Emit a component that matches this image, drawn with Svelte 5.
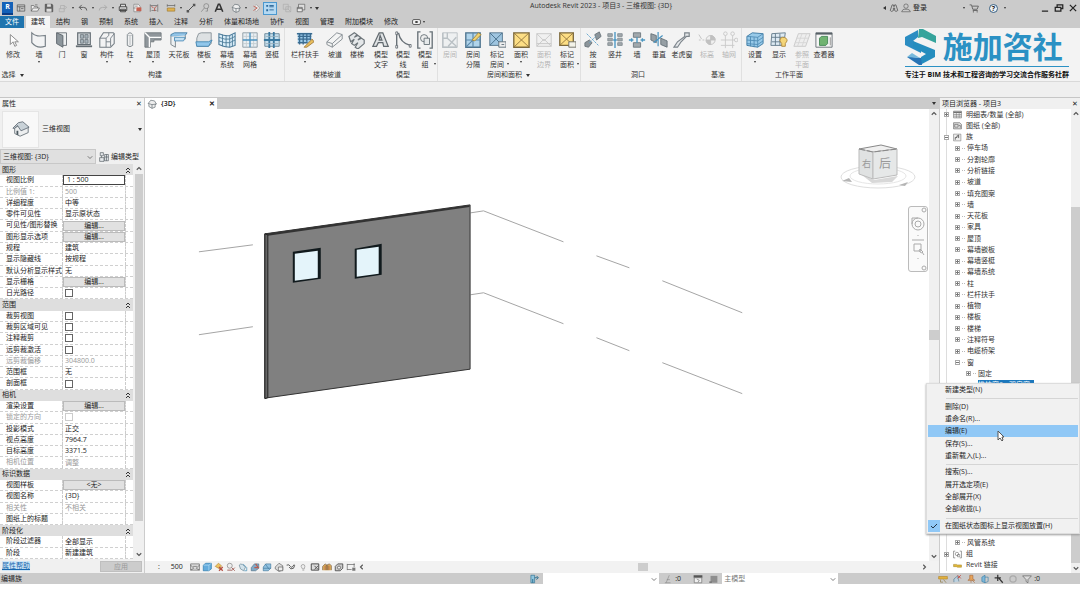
<script lang="ts">
    type Tool = { label: string; icon: string; size?: string; arrow?: boolean; off?: boolean };
    type Panel = { title: string; arrow?: boolean; line?: boolean; tools: Tool[] };
    type Prop = { name: string; value?: string; kind?: string; off?: boolean };

    const ribbonIcons: Record<string, string> = {
        cursor: '<path d="M7 4v11l3-3 2 5 2-1-2-4h4z" fill="#fff" stroke="#777"/>',
        wall: '<path d="M2 2c4 4 8 4 15 3v12c-6 2-11 1-15-4z" fill="#f2f4f5" stroke="#68727a" stroke-width="1.3"/>',
        door: '<path d="M4 2h11v14h-4" fill="#eceff0" stroke="#596269"/><path d="M4 2l7 3v13l-7-4z" fill="#828c93" stroke="#4c555c"/>',
        window: '<path d="M3 2h14v13H3z" fill="#d4dadd" stroke="#566067" stroke-width="1.3"/><path d="M6 4h3.500v4H6zM11 4h3.500v4H11zM6 9.500h3.500v4H6zM11 9.500h3.500v4H11z" fill="#9eabb3" stroke="#69737a"/><path d="M1 17h18" stroke="#566067" stroke-width="2"/>',
        component: '<path d="M2 8l4-6h11l1 1v11l-4 4H2z" fill="#f3f4f5" stroke="#68727a" stroke-width="1.200"/><path d="M2 8h7v10M9 8l3-3V2M9 12h5V8l4-5M14 12v5" fill="none" stroke="#68727a"/>',
        column: '<path d="M7 4q3-4 6 0v12q-3 3-6 0z" fill="#f0f1f2" stroke="#6c757b"/><path d="M7 4q3 3 6 0M10 6v10" fill="none" stroke="#abb1b5"/>',
        roof: '<path d="M1 2h18v8h-8v2H7v6H1z" fill="#858d92" stroke="#646c72"/><path d="M1 2l5 5h13M6 7v11" fill="none" stroke="#fff" stroke-width="1.500"/>',
        ceiling: '<path d="M1 4l4-2h14l-3 4H1z" fill="#8ac2e8" stroke="#34739d"/><path d="M1 6v9l5 3V9h11V5" fill="#edf0f2" stroke="#6a747b"/><path d="M5 7h12l-2 4H5z" fill="#bedff4" stroke="#3e85b3"/>',
        floor: '<path d="M4 3l3-1h11v12l-3 3H2V8z" fill="#dbe0e2" stroke="#7c868d"/><path d="M1 12h14l4-2-4 7H2z" fill="#88c3eb" stroke="#327cac"/>',
        curtain: '<path d="M1 3q7 3 12 2l6-3v14l-6 2Q7 18 1 15z" fill="#d7edf9" stroke="#3b6f91" stroke-width="1.200"/><path d="M5 4v13M9 5v13M13 5v13M16 4v13M1 7q7 3 12 2l6-3M1 11q7 3 12 2l6-3" fill="none" stroke="#3b6f91"/>',
        grid: '<path d="M2 2h16v16H2z" fill="#e8eff3" stroke="#81929c"/><path d="M2 6h16M2 14h16M6 2v16M14 2v16" stroke="#c0c9ce"/><path d="M10 2v16M2 10h16" stroke="#3888bb" stroke-width="1.500"/>',
        mullion: '<path d="M2 3h16v14H2z" fill="#c2dfef" stroke="#5b7a8d"/><path d="M7 1v18M12 1v18M1 10h18" stroke="#276c98" stroke-width="2"/><path d="M3 6h14M3 14h14" stroke="#8fa7b5"/>',
        railing: '<path d="M2 2h15v11H2z" fill="#93c7e8"/><path d="M1 3h17M2 6h15M2 9h15M2 13h11M4 3v12M8 3v12M12 3v9M16 3v7" stroke="#285e87" stroke-width="1.500"/><path d="M9 18l9-9 2 3-8 6z" fill="#e7b94d" stroke="#9b702b"/>',
        ramp: '<path d="M1 12L12 2l6 2v5L7 18l-6-3z" fill="#f4f5f5" stroke="#737c82"/><path d="M1 12l6 2L18 4M7 14v4" fill="none" stroke="#737c82"/>',
        stair: '<path d="M1 6l6-4 3 2-3 3 4-2 3 2-3 3 4-2 3 2v4l-7 6-3-2 3-5-4 3-3-2 3-5-4 3z" fill="#e3e6e8" stroke="#5f686e" stroke-width="1.300"/>',
        mtext: '<path d="M1 17L8 2h4l6 15h-5l-1-4H7l-2 4zM8 10h3L9 5z" fill="#dfe2e4" stroke="#535c62" stroke-width="1.400"/>',
        mline: '<path d="M3 2v16M5 2q2 11 13 14" fill="none" stroke="#596269" stroke-width="1.500"/><path d="M2 1h2v3H2zM2 16h2v3H2zM17 15h2v3h-2z" fill="#fff" stroke="#596269"/>',
        mgroup: '<path d="M5 1H2v18h3M15 1h3v18h-3" fill="none" stroke="#59646b" stroke-width="1.500"/><circle cx="9" cy="8" r="4" fill="#eee" stroke="#59646b"/><path d="M9 8h6v7H9z" fill="#e5e8ea" stroke="#59646b"/>',
        room: '<path d="M2 2h16v16H2z" fill="#e7edf0" stroke="#65757f"/><path d="M2 2v16h16M7 2v6H2M7 8l10 9M17 7L8 17" fill="none" stroke="#65757f" stroke-width="1.500"/>',
        separate: '<path d="M2 2h16v16H2z" fill="#a9d1eb" stroke="#3d6683" stroke-width="1.500"/><path d="M10 2v16M2 10h16M2 18L16 4" stroke="#4d7ea3" stroke-width="1.300"/><path d="M9 10l7-8 3 2-7 7z" fill="#f0cf63" stroke="#9b7b2b"/>',
        tag: '<path d="M2 2h14v14H2z" fill="#96c1df" stroke="#446781"/><path d="M2 2l14 14M16 2L2 16" stroke="#315c7d"/><path d="M12 12h8v6h-8z" fill="#eee" stroke="#50616d"/><path d="M15 15h3" stroke="#50616d"/>',
        area: '<path d="M2 2h17v16H2z" fill="#ffdc78" stroke="#705b2a" stroke-width="1.500"/><path d="M2 2l17 16M19 2L2 18" stroke="#87682a"/>',
        bound: '<path d="M2 3h16v14H2z" fill="#eee" stroke="#858585"/><path d="M2 3l8 8 8-8M2 17l8-8 8 8M2 14h16" fill="none" stroke="#858585"/>',
        areatag: '<path d="M2 2h15v14H2z" fill="#ffdc78" stroke="#705b2a" stroke-width="1.500"/><path d="M2 2l15 14M17 2L2 16" stroke="#87682a"/><path d="M12 12h8v6h-8z" fill="#f3f3e9" stroke="#5e5e55"/>',
        face: '<path d="M1 13l5-3 3 3-4 5-4-1zM12 4l5-3 2 5-5 4z" fill="#818b92" stroke="#5c666d"/><path d="M3 3l13 13M6 13L13 6" stroke="#519dcb" stroke-dasharray="3 1"/>',
        shaft: '<path d="M2 3h5v3H2zM13 3h5v3h-5zM2 8h5v3H2zM13 8h5v3h-5zM2 13h5v3H2zM13 13h5v3h-5z" fill="#9ba2a6" stroke="#7b868c"/><path d="M10 1v18M8 10h4" stroke="#378dbe" stroke-width="1.500"/>',
        owall: '<path d="M6 2h8v5H6zM6 13h8v5H6z" fill="#9aa2a6" stroke="#5f6b73"/><path d="M1 10h5M14 10h5M4 8v4M16 8v4M10 7v6" stroke="#398ebd" stroke-width="1.500"/>',
        vertical: '<path d="M1 3l6 2v8l-6-3zM12 8l7 3v7l-7-3z" fill="#8c969c" stroke="#56636b"/><path d="M9 1v16M4 13l10-8" stroke="#3488ba" stroke-width="1.300"/>',
        dormer: '<path d="M13 2h5v4h-3L9 12l-4 6H1l4-6 8-6z" fill="#e3e6e8" stroke="#707980" stroke-width="1.300"/>',
        level: '<path d="M1 10h9" stroke="#777" stroke-dasharray="2 2"/><circle cx="14" cy="10" r="5" fill="#eee" stroke="#777"/><path d="M14 5a5 5 0 0 1 5 5h-5zM14 10v5a5 5 0 0 1-5-5zM1 4l3 5" fill="#777" stroke="#777"/>',
        axis: '<path d="M6 5v14M14 5v14M1 10h15M1 16h15" stroke="#8c8c8c"/><circle cx="6" cy="3" r="2" fill="none" stroke="#888"/><circle cx="14" cy="3" r="2" fill="none" stroke="#888"/><circle cx="18" cy="10" r="2" fill="none" stroke="#888"/>',
        set: '<path d="M1 6l6-4 12 1v11l-6 4-12-2z" fill="#8fc6e9" stroke="#286c9a"/><path d="M1 6l12 1v11M13 7l6-4M5 6v11M9 7v11M1 10l12 1 6-4M1 14l12 1 6-4" fill="none" stroke="#3f82af"/>',
        show: '<path d="M2 3l15-1-2 14H1z" fill="#dceaf3" stroke="#526c7e"/><path d="M6 3v13M11 3v13M2 7h14M2 12h14" stroke="#526c7e"/><path d="M14 7q5 0 5 4l-2 3v3h-4v-3l-2-3q0-4 3-4z" fill="#f6d36c" stroke="#a67c28"/>',
        refplane: '<path d="M6 3h13l-5 14H1z" fill="#e8e8e8" stroke="#888"/><path d="M4 8h13M2 13h13M10 3L5 17M15 3l-5 14" stroke="#aaa"/>',
        viewer: '<path d="M1 2h18v16H1z" fill="#f7f7f7" stroke="#566067"/><path d="M1 3h18" stroke="#475158" stroke-width="2"/><path d="M5 8l2-2h7v8l-2 2H5z" fill="#62ad64" stroke="#327c45"/><path d="M17 7v9" stroke="#888"/>',
    };

    const smallIcons: Record<string, string> = {
        home: '<path d="M2 3h12v10H2zM2 6h12M6 6v7M8 9h4" fill="none" stroke="#444"/>',
        open: '<path d="M2 13V4h4l1 2h5v2M2 13l3-5h10l-3 5z" fill="#eee" stroke="#555"/><path d="M8 3h4" stroke="#555"/>',
        save: '<path d="M2 2h11l1 2v10H2z" fill="#666" stroke="#444"/><path d="M5 2h6v4H5zM4 9h8v5H4z" fill="#ddd"/>',
        sync: '<path d="M2 9h8v5H2zM4 9V4h6v5M9 4l5 3-5 4" fill="none" stroke="#aaa"/>',
        undo: '<path d="M6 3L2 7l4 4M2 7h7q5 0 5 5" fill="none" stroke="#555" stroke-width="1.500"/>',
        redo: '<path d="M10 3l4 4-4 4M14 7H7q-5 0-5 5" fill="none" stroke="#aaa" stroke-width="1.500"/>',
        print: '<path d="M4 6V2h8v4M2 6h12v6H2zM4 10h8v4H4z" fill="#ddd" stroke="#444" stroke-width="1.500"/>',
        pdf: '<path d="M3 2h7l3 3v9H3z" fill="#eee" stroke="#777"/><path d="M7 7h8v6H7z" fill="#c76050"/><path d="M5 5h4M2 8h4" stroke="#666"/>',
        dims: '<path d="M2 2v12M14 2v12M4 12h8M2 4h12" stroke="#777" stroke-width="1.300"/><path d="M4 5l3 3M12 5L9 8v5" fill="none" stroke="#bd594c" stroke-width="1.500"/>',
        ruler: '<path d="M2 8h12v5H2z" fill="#dfb250" stroke="#9a742c"/><path d="M2 4h12M2 2v4M14 2v4" stroke="#555"/>',
        line: '<path d="M3 13L13 3" stroke="#444" stroke-width="1.500"/><path d="M1 11h4v4H1zM11 1h4v4h-4z" fill="#555"/>',
        mark: '<circle cx="10" cy="5" r="4" fill="none" stroke="#777"/><path d="M7 8l-5 6M12 8v5H9" fill="none" stroke="#777"/>',
        text: '<path d="M2 14L7 2h2l5 12M4 10h8" fill="none" stroke="#333" stroke-width="2.500"/>',
        house: '<path d="M2 7l4-5 6 1 3 5-2 1v4l-5 2-5-3V8z" fill="#eee" stroke="#59636a"/><path d="M2 7l6 2 7-1M8 9v6" fill="none" stroke="#59636a"/>',
        section: '<path d="M8 2l6 6-6 6" fill="#eee" stroke="#888"/><path d="M4 5l6 3-6 4" fill="none" stroke="#c06458" stroke-width="1.500"/>',
        thin: '<path d="M2 3h3v3H2zM2 10h3v3H2z" fill="#2e699a"/><path d="M7 4h7M7 6h7M7 11h7" stroke="#2e699a" stroke-width="1.500"/>',
        closeviews: '<path d="M2 2h8v8H2zM6 6h8v8H6z" fill="none" stroke="#aaa"/><path d="M9 9l5 5" stroke="#aaa"/>',
        switch: '<path d="M4 2h10v9H4z" fill="#ddd" stroke="#555"/><path d="M2 7h8v7H2zM2 9h8" fill="#eee" stroke="#444"/>',
        find: '<path d="M5 3h2l1 3 1-3h2l3 9q-3 3-5 0V8H7v4q-3 3-5 0z" fill="none" stroke="#555" stroke-width="1.300"/>',
        user: '<circle cx="8" cy="5" r="3.500" fill="none" stroke="#555"/><path d="M1 14q2-5 5-4h4q4 0 5 4z" fill="none" stroke="#555"/>',
        cart: '<path d="M1 3h3l2 7h7l2-5H5M6 12h8" fill="none" stroke="#555" stroke-width="1.300"/><circle cx="7" cy="14" r="1" fill="#555"/><circle cx="13" cy="14" r="1" fill="#555"/>',
        detail: '<path d="M1 3h14v10H1z" fill="#ddd" stroke="#555"/><path d="M1 5l5 5-5 3M15 5l-5 5 5 3M5 7h6" fill="none" stroke="#555"/>',
        cube: '<path d="M2 5l4-3h9v9l-4 3H2z" fill="#63abdc" stroke="#2474a9"/><path d="M2 5h9v9M11 5l4-3" fill="none" stroke="#bde0f5"/>',
        sun: '<path d="M2 7l5-5 5 4-3 5z" fill="#edc362" stroke="#b38231"/><path d="M8 8l6 6M14 8l-6 6" stroke="#b54e41" stroke-width="2"/>',
        shadow: '<circle cx="6" cy="6" r="4" fill="#eee" stroke="#777"/><path d="M2 13h7M9 9l5 5M14 9l-5 5" stroke="#a25f58" stroke-width="1.500"/>',
        render: '<path d="M2 5q2-3 5-1l5 4-3 6-5-3z" fill="#d3e3eb" stroke="#597a8c"/><path d="M8 3l6 6v5h-4" fill="none" stroke="#2e83b1"/>',
        crop: '<path d="M2 9l5-6h7v7l-5 4H2z" fill="#80abc9" stroke="#4a6a7f"/><path d="M9 3l5 7M7 9h7" stroke="#b95b4f" stroke-width="2"/>',
        cropon: '<path d="M2 8l4-5h8v7l-4 4H2z" fill="#91c1e0" stroke="#3c7499"/><path d="M5 3l6 8M2 10h12" stroke="#3c7499"/>',
        lock: '<path d="M2 8l6-6 6 4v7l-6 2-6-4z" fill="#ddd" stroke="#555"/><path d="M7 8h7v6H7z" fill="#eee" stroke="#555"/>',
        glasses: '<path d="M1 5q4-2 6 2t6-3M5 8q2 5 7 2l2-5" fill="none" stroke="#555" stroke-width="1.500"/>',
        bulb: '<path d="M8 4q3 0 3 3l-1 4H7L5 7q0-3 3-3zM7 13h3" fill="#eee" stroke="#888"/>',
        temp: '<path d="M2 3h12v10H2z" fill="#ddd" stroke="#444" stroke-width="1.500"/><path d="M7 6l6 6M13 6l-6 6" stroke="#555" stroke-width="1.500"/>',
        analyse: '<path d="M1 13V7l4-4 4 3v7M7 13V5l5-2 3 3v7" fill="#d8ac58" stroke="#775840"/><path d="M5 6v7M11 6v7" stroke="#a44840"/>',
        locate: '<path d="M2 7l4-4h8v7l-4 4H2z" fill="#ccc" stroke="#444" stroke-width="1.300"/><circle cx="8" cy="9" r="2.500" fill="#eee" stroke="#444"/>',
        edges: '<path d="M2 3v10M2 4h12M2 12h7M13 2v6" fill="none" stroke="#555"/><path d="M10 9h5v5h-5z" fill="#777"/>',
        workset: '<path d="M3 2h6v12H3z" fill="#92c6de" stroke="#276d8f"/><path d="M9 6h5M12 3l3 3-3 3M6 8v6" fill="none" stroke="#276d8f" stroke-width="1.500"/>',
        pin: '<path d="M10 2L5 14M3 14h9M6 9h5" stroke="#888" fill="none"/>',
        list: '<path d="M1 2h14v4H1z" fill="#555"/><path d="M2 6h12v8H2zM6 8l4 2-2 3" fill="#eee" stroke="#666"/>',
        block: '<path d="M4 3h11v11H4z" fill="#8e8e8e"/><path d="M2 12h4v2H2z" fill="#666"/>',
        link: '<path d="M1 4h14v4H1z" fill="#e2b13d" stroke="#b3872b"/><path d="M4 9v4h4M9 9l4 5" fill="none" stroke="#8c7439"/>',
        under: '<path d="M3 13V8l6-5 2 9" fill="#bad0df" stroke="#54788d"/><path d="M9 2l5 5M14 2L9 7" stroke="#c24b42" stroke-width="1.500"/>',
        pinned: '<path d="M6 2h5v6l3 2H3l3-2z" fill="#e7a45c" stroke="#aa6937"/><path d="M8 10v4M10 10l4 4" stroke="#aa6937"/>',
        byface: '<path d="M3 5l5-3v12l-5-2z" fill="#7db8db" stroke="#357ba3"/><path d="M8 5h5v7l-5 2" fill="none" stroke="#357ba3"/>',
        drag: '<path d="M6 1v10M1 6h10M8 7l6 7" stroke="#333" stroke-width="2"/>',
        ring: '<circle cx="8" cy="8" r="5" fill="none" stroke="#aaa" stroke-width="2"/>',
        filter: '<path d="M1 3h14L9.500 9v5L6.500 12V9z" fill="#ddd" stroke="#555"/>',
        types: '<path d="M2 1h5v5H2zM1 9h7v6H1zM9 4h6v10H9zM9 8h6M4 6v3M12 4v10" fill="#e5e9eb" stroke="#4c555b"/>',
        schedule: '<path d="M1 2h14v12H1z" fill="#eee" stroke="#666"/><path d="M1 4h14" stroke="#555" stroke-width="2"/><path d="M1 8h14M1 11h14M6 4v10M11 4v10" stroke="#777"/>',
        sheet: '<path d="M1 3h11l3 3v8H1z" fill="#ddd" stroke="#555"/><path d="M3 6h6v5H3zM10 8h3v4" fill="none" stroke="#555"/>',
        family: '<path d="M1 2h13v12H1z" fill="#eee" stroke="#777"/><path d="M4 12V8h3V5h3M10 3v6" fill="none" stroke="#555" stroke-width="1.500"/>',
        group: '<path d="M4 2H1v12h3M12 2h3v12h-3" fill="none" stroke="#555"/><circle cx="7" cy="7" r="3" fill="none" stroke="#666"/><path d="M8 8h4v4H8z" fill="none" stroke="#666"/>',
        revit: '<path d="M1 6h5l2 1h7v4H8L6 10H1z" fill="#dfb73a" stroke="#a98a2a"/>',
    };

    const quick = [
        { icon: 'home' }, { icon: 'open' }, { icon: 'save' },
        { icon: 'sync', arrow: true }, { icon: 'undo', arrow: true }, { icon: 'redo', arrow: true },
        { icon: 'print' }, { icon: 'pdf', gap: true }, { icon: 'dims', gap: true },
        { icon: 'ruler', arrow: true }, { icon: 'line' }, { icon: 'mark' }, { icon: 'text', gap: true },
        { icon: 'house', arrow: true }, { icon: 'section' }, { icon: 'thin', gap: true, on: true },
        { icon: 'closeviews' }, { icon: 'switch', arrow: true },
    ];

    const tabs = ['文件', '建筑', '结构', '钢', '预制', '系统', '插入', '注释', '分析', '体量和场地', '协作', '视图', '管理', '附加模块', '修改'];

    const panels: Panel[] = [
        { title: '选择', arrow: true, tools: [{ label: '修改', icon: 'cursor', size: 'm' }] },
        { title: '构建', line: true, tools: [
            { label: '墙', icon: 'wall', size: 'm', arrow: true }, { label: '门', icon: 'door' }, { label: '窗', icon: 'window' },
            { label: '构件', icon: 'component', size: 'm', arrow: true }, { label: '柱', icon: 'column', arrow: true },
            { label: '屋顶', icon: 'roof', size: 'm', arrow: true }, { label: '天花板', icon: 'ceiling', size: 'l' },
            { label: '楼板', icon: 'floor', arrow: true }, { label: '幕墙 系统', icon: 'curtain', size: 'm' },
            { label: '幕墙 网格', icon: 'grid' }, { label: '竖梃', icon: 'mullion' },
        ] },
        { title: '楼梯坡道', tools: [
            { label: '栏杆扶手', icon: 'railing', size: 'xl', arrow: true }, { label: '坡道', icon: 'ramp' }, { label: '楼梯', icon: 'stair' },
        ] },
        { title: '模型', line: true, tools: [
            { label: '模型 文字', icon: 'mtext' }, { label: '模型 线', icon: 'mline' }, { label: '模型 组', icon: 'mgroup', arrow: true },
        ] },
        { title: '房间和面积', arrow: true, line: true, tools: [
            { label: '房间', icon: 'room', off: true }, { label: '房间 分隔', icon: 'separate', size: 'm' },
            { label: '标记 房间', icon: 'tag', size: 'm', arrow: true }, { label: '面积', icon: 'area', size: 'm', arrow: true },
            { label: '面积 边界', icon: 'bound', off: true }, { label: '标记 面积', icon: 'areatag', size: 'm', arrow: true },
        ] },
        { title: '洞口', tools: [
            { label: '按 面', icon: 'face' }, { label: '竖井', icon: 'shaft' }, { label: '墙', icon: 'owall' },
            { label: '垂直', icon: 'vertical' }, { label: '老虎窗', icon: 'dormer', size: 'm' },
        ] },
        { title: '基准', line: true, tools: [
            { label: '标高', icon: 'level', off: true }, { label: '轴网', icon: 'axis', off: true },
        ] },
        { title: '工作平面', tools: [
            { label: '设置', icon: 'set', size: 'm', arrow: true }, { label: '显示', icon: 'show', size: 'm' },
            { label: '参照 平面', icon: 'refplane', off: true }, { label: '查看器', icon: 'viewer' },
        ] },
    ];

    const props: Prop[] = [
        { name: '图形', kind: 'head' },
        { name: '视图比例', value: '1 : 500', kind: 'focus' },
        { name: '比例值 1:', value: '500', off: true },
        { name: '详细程度', value: '中等' },
        { name: '零件可见性', value: '显示原状态' },
        { name: '可见性/图形替换', value: '编辑...', kind: 'button' },
        { name: '图形显示选项', value: '编辑...', kind: 'button' },
        { name: '规程', value: '建筑' },
        { name: '显示隐藏线', value: '按规程' },
        { name: '默认分析显示样式', value: '无' },
        { name: '显示栅格', value: '编辑...', kind: 'button' },
        { name: '日光路径', kind: 'check' },
        { name: '范围', kind: 'head' },
        { name: '裁剪视图', kind: 'check' },
        { name: '裁剪区域可见', kind: 'check' },
        { name: '注释裁剪', kind: 'check' },
        { name: '远剪裁激活', kind: 'check' },
        { name: '远剪裁偏移', value: '304800.0', off: true },
        { name: '范围框', value: '无' },
        { name: '剖面框', kind: 'check' },
        { name: '相机', kind: 'head' },
        { name: '渲染设置', value: '编辑...', kind: 'button' },
        { name: '锁定的方向', kind: 'check', off: true },
        { name: '投影模式', value: '正交' },
        { name: '视点高度', value: '7964.7' },
        { name: '目标高度', value: '3371.5' },
        { name: '相机位置', value: '调整', off: true },
        { name: '标识数据', kind: 'head' },
        { name: '视图样板', value: '<无>', kind: 'button' },
        { name: '视图名称', value: '{3D}' },
        { name: '相关性', value: '不相关', off: true },
        { name: '图纸上的标题', value: '' },
        { name: '阶段化', kind: 'head' },
        { name: '阶段过滤器', value: '全部显示' },
        { name: '阶段', value: '新建建筑' },
    ];

    const families = ['停车场', '分割轮廓', '分析链接', '坡道', '填充图案', '墙', '天花板', '家具', '屋顶', '幕墙嵌板', '幕墙竖梃', '幕墙系统', '柱', '栏杆扶手', '植物', '楼板', '楼梯', '注释符号', '电缆桥架'];

    const menu = ['新建类型(N)', '-', '删除(D)', '重命名(R)...', '编辑(E)', '保存(S)...', '重新载入(L)...', '-', '搜索(S)...', '展开选定项(E)', '全部展开(X)', '全部收拢(L)', '-', '在图纸状态图标上显示视图放置(H)'];

    const viewTools = ['detail', 'cube', 'sun', 'shadow', 'render', 'crop', 'cropon', 'lock', 'glasses', 'bulb', 'temp', 'analyse', 'locate', 'edges'];

    let checks = $state<Record<string, boolean>>({});
    let activeTab = $state('建筑');
</script>

{#snippet small(name: string)}
    <svg class="small" viewBox="0 0 16 16" aria-hidden="true">{@html smallIcons[name]}</svg>
{/snippet}

{#snippet chevron(dir: string)}
    <svg class="chev {dir}" viewBox="0 0 8 8" aria-hidden="true"><path d="M1 5l3-3 3 3" /></svg>
{/snippet}

{#snippet branch(label: string, level: string, open = false)}
    <li class="node {level}">
        <i class="box" class:open></i><i class="twig"></i><span>{label}</span>
    </li>
{/snippet}

<div class="app">
    <header class="titlebar">
        <div class="quick">
            <button class="logo" aria-label="Revit">R</button>
            {#each quick as q}
                <button class="qbtn" class:on={q.on} aria-label={q.icon}>{@render small(q.icon)}</button>
                {#if q.arrow}<i class="tri tiny"></i>{/if}
                {#if q.gap}<i class="gap"></i>{/if}
            {/each}
            <i class="tri"></i>
        </div>
        <div class="title">Autodesk Revit 2023 - 项目3 - 三维视图: {'{3D}'}</div>
        <div class="account">
            <i class="tri left"></i>
            <button class="qbtn" aria-label="搜索">{@render small('find')}</button>
            <button class="login">{@render small('user')}登录</button>
            <i class="tri tiny"></i>
            <button class="qbtn" aria-label="商店">{@render small('cart')}</button>
            <button class="help" aria-label="帮助">?</button>
            <i class="tri tiny"></i>
        </div>
        <div class="winbtns">
            <button aria-label="最小化"><svg class="small" viewBox="0 0 16 16"><path d="M3 13h10" /></svg></button>
            <button aria-label="还原"><svg class="small" viewBox="0 0 16 16"><path d="M5 6V3h9v6h-3M2 7h9v6H2z" /></svg></button>
            <button aria-label="关闭"><svg class="small" viewBox="0 0 16 16"><path d="M3 3l10 10M13 3L3 13" /></svg></button>
        </div>
    </header>

    <nav class="tabs">
        {#each tabs as tab, i}
            <button class:file={i === 0} class:active={tab === activeTab} onclick={() => (activeTab = tab)}>{tab}</button>
        {/each}
        <button class="expand" aria-label="功能区"><i class="pill"></i><i class="tri tiny"></i></button>
    </nav>

    <section class="ribbon">
        {#each panels as panel}
            <div class="panel" class:line={panel.line}>
                <div class="tools">
                    {#each panel.tools as tool}
                        <button class="tool {tool.size ?? ''}" disabled={tool.off}>
                            <svg viewBox="0 0 20 20" aria-hidden="true">{@html ribbonIcons[tool.icon]}</svg>
                            {#each tool.label.split(' ') as part}<span>{part}</span>{/each}
                            {#if tool.arrow}<i class="tri tiny" class:side={tool.label.includes(' ')}></i>{/if}
                        </button>
                    {/each}
                </div>
                <div class="caption">{panel.title}{#if panel.arrow}<i class="tri"></i>{/if}</div>
            </div>
        {/each}
        <div class="brand">
            <div class="brand-top">
                <svg viewBox="0 0 32 36" aria-hidden="true">
                    <path d="M0 8L13 1v7L8 12l8 5v7L0 16z" fill="#2b8dc2" />
                    <path d="M14 0h4l13 7v7l-14-6-4 1z" fill="#36a49c" />
                    <path d="M8 12l22 9v7L15 36l1-8 5-3-13-7z" fill="#258dbe" />
                    <path d="M2 28h5l9 1 1 7h-3z" fill="#2874b5" />
                    <path d="M2 28l5-4 8 5" fill="#77b9dc" />
                </svg>
                <strong>施加咨社</strong>
            </div>
            <p>专注于 BIM 技术和工程咨询的学习交流合作服务社群</p>
        </div>
    </section>
    <div class="options"></div>

    <main class="work">
        <aside class="props">
            <div class="bar"><span>属性</span><button aria-label="关闭属性">✕</button></div>
            <div class="type">
                <div class="thumb">
                    <svg viewBox="0 0 20 20" aria-hidden="true">
                        <path d="M3 9v6l6 3 9-4V8l-7-4z" fill="#eceeef" stroke="#6a747b" />
                        <path d="M1 9l6-6 5-1 7 6-9 4-4-6-4 4z" fill="#c9d2d8" stroke="#66717a" />
                        <path d="M5 12h2v5l-2-1z" fill="#4c5960" />
                    </svg>
                </div>
                <span>三维视图</span>
                <i class="tri"></i>
            </div>
            <div class="instance">
                <div class="select">
                    <select aria-label="类型选择器"><option>三维视图: {'{3D}'}</option></select>
                    {@render chevron('down')}
                </div>
                <button>{@render small('types')}编辑类型</button>
            </div>
            <div class="gridwrap">
                <div class="rows">
                    {#each props as p, i}
                        {#if p.kind === 'head'}
                            <div class="head">
                                <span>{p.name}</span>
                                <svg class="fold-mark" viewBox="0 0 6 8" aria-hidden="true"><path d="M1 4l2-2 2 2M1 7l2-2 2 2" /></svg>
                            </div>
                        {:else}
                            <div class="row" class:off={p.off}>
                                <label for="prop-{i}">{p.name}</label>
                                <div class="val">
                                    {#if p.kind === 'check'}
                                        <input id="prop-{i}" type="checkbox" disabled={p.off} bind:checked={checks[p.name]} />
                                    {:else if p.kind === 'button'}
                                        <button id="prop-{i}">{p.value}</button>
                                    {:else}
                                        <input id="prop-{i}" type="text" class:focus={p.kind === 'focus'} disabled={p.off} value={p.value} />
                                    {/if}
                                </div>
                                <i class="mini"></i>
                            </div>
                        {/if}
                    {/each}
                </div>
                <div class="vscroll props-scroll">{@render chevron('up')}<i></i>{@render chevron('down')}</div>
            </div>
            <div class="foot"><a href="#help">属性帮助</a><button disabled>应用</button></div>
        </aside>

        <section class="view">
            <div class="viewtabs">
                <div class="viewtab">{@render small('house')}<span>{'{3D}'}</span><button aria-label="关闭视图">✕</button></div>
                <i class="tri"></i>
            </div>
            <div class="stage">
                <div class="canvas">
                    <svg class="scene" viewBox="145 109 785 451" preserveAspectRatio="xMinYMin meet" role="img" aria-label="三维视图">
                        <g stroke="#a5a5a5" stroke-width="1" fill="none">
                            <path d="M199 252l54-7M199 335l54-8M471 213l13-2 80 31M597 256l33 12M663 281l80 32M471 295l13-2 80 31M597 338l33 13M663 363l80 31" />
                        </g>
                        <path d="M265 234l205.500-29v164.500L265 398.500z" fill="#808080" stroke="#333" />
                        <path d="M265 234l205-29v2L268 236z" fill="#333" />
                        <path d="M265 234l3 1v163l-3 1z" fill="#666" stroke="#222" />
                        <path d="M293 252l28-4v31l-28 4z" fill="#111a1d" />
                        <path d="M295 254l23-3v27l-23 3z" fill="#e4f4fa" />
                        <path d="M355 249l27-5v31l-27 4z" fill="#111a1d" />
                        <path d="M357 250l22-3v27l-22 3z" fill="#e4f4fa" />
                    </svg>
                    <svg class="cube" viewBox="0 0 78 54" aria-label="ViewCube">
                        <ellipse cx="39" cy="36" rx="37" ry="11" fill="none" stroke="#dedede" />
                        <ellipse cx="39" cy="35" rx="28" ry="8" fill="#fff" stroke="#e6e6e6" />
                        <path d="M3 40l7-3 3 4zM60 44l9-3-3 4z" fill="#b5b5b5" />
                        <path d="M23 34l12 5 24-4-6 6-20 1z" fill="#d8d8d8" />
                        <path d="M20 8l22-4 16 4-24 3z" fill="#f0f0f0" stroke="#888" />
                        <path d="M20 8l14 3v27l-14-5z" fill="#e0e2e2" stroke="#bbb" />
                        <path d="M34 11l24-3v26l-24 4z" fill="#e6e8e8" stroke="#bbb" />
                        <path d="M20 8l14 3 24-3" fill="none" stroke="#888" stroke-dasharray="6 2" />
                        <text x="23" y="26" font-size="9">右</text>
                        <text x="40" y="27" font-size="12">后</text>
                    </svg>
                    <div class="navbar">
                        <svg viewBox="0 0 18 64" aria-hidden="true">
                            <circle cx="15" cy="3" r="2" /><circle cx="15" cy="61" r="2" />
                            <circle cx="9" cy="17" r="6" /><circle cx="9" cy="17" r="3" />
                            <path d="M3 17v-6h6M9 28v1M3 33h12M5 37h7v7H5zM11 42a2 2 0 1 0 3 3zM13 45l2 3M9 51v1" />
                        </svg>
                    </div>
                </div>
                <div class="vscroll view-scroll">{@render chevron('up')}<i></i>{@render chevron('down')}</div>
            </div>
            <div class="viewbar">
                <span class="scale"><b>:</b><b>500</b></span>
                {#each viewTools as v}
                    <button aria-label={v}>{@render small(v)}</button>
                {/each}
                <span class="hscroll">{@render chevron('prev')}<i></i>{@render chevron('next')}</span>
            </div>
        </section>

        <aside class="browser">
            <div class="bar"><span>项目浏览器 - 项目3</span><button aria-label="关闭浏览器">✕</button></div>
            <div class="gridwrap">
                <ul class="tree">
                    <li class="node"><i class="box"></i>{@render small('schedule')}<span>明细表/数量 (全部)</span></li>
                    <li class="node"><i class="box none"></i>{@render small('sheet')}<span>图纸 (全部)</span></li>
                    <li class="node"><i class="box open"></i>{@render small('family')}<span>族</span></li>
                    {#each families as f}
                        {@render branch(f, 'l2')}
                    {/each}
                    {@render branch('窗', 'l2', true)}
                    {@render branch('固定', 'l3')}
                    <li class="node l3"><i class="box none"></i><i class="twig"></i><span class="sel">推拉窗6 - 双扇窗</span></li>
                    <li class="fold"></li>
                    {@render branch('风管系统', 'l2')}
                    <li class="node"><i class="box"></i>{@render small('group')}<span>组</span></li>
                    <li class="node"><i class="box none"></i>{@render small('revit')}<span>Revit 链接</span></li>
                </ul>
                <div class="vscroll tree-scroll">{@render chevron('up')}<i></i>{@render chevron('down')}</div>
            </div>
            <div class="menu" role="menu">
                {#each menu as item, i}
                    {#if item === '-'}
                        <hr />
                    {:else}
                        <button role="menuitem" class:hot={item === '编辑(E)'}>
                            <i class="mark">{#if i === menu.length - 1}<svg viewBox="0 0 12 12"><path d="M3 6l2 2 4-4" /></svg>{/if}</i>
                            <span>{item}</span>
                        </button>
                    {/if}
                {/each}
                <svg class="pointer" viewBox="0 0 8 12" aria-hidden="true"><path d="M1 1v9l2-2 2 3 1-1-1-3h2z" /></svg>
            </div>
        </aside>
    </main>

    <footer class="status">
        <span class="msg">编辑族</span>
        <div class="mid">
            {@render small('workset')}
            <div class="select"><select aria-label="工作集"><option></option></select>{@render chevron('down')}</div>
            <span class="count">{@render small('pin')}:0</span>
            <span class="pair">{@render small('list')}{@render small('block')}</span>
            <div class="select"><select aria-label="设计选项"><option>主模型</option></select>{@render chevron('down')}</div>
        </div>
        <div class="end">
            {#each ['link', 'under', 'pinned', 'byface', 'drag', 'ring'] as s}
                <button aria-label={s}>{@render small(s)}</button>
            {/each}
            <span class="count">{@render small('filter')}:0</span>
        </div>
    </footer>
</div>

<style>
    :global(body) {
        margin: 0;
        background: #fff;
    }

    .app {
        display: flex;
        flex-direction: column;
        height: 100vh;
        padding-bottom: 24px;
        box-sizing: border-box;
        overflow: hidden;
        font-family: "Open Sans", "Noto Sans CJK SC", sans-serif;
        font-size: 7px;
        line-height: 10px;
        color: #222;
        white-space: nowrap;
    }

    .app :global(*) {
        box-sizing: border-box;
    }

    button,
    input,
    select {
        font: inherit;
        color: inherit;
        margin: 0;
        padding: 0;
        border: 0;
        border-radius: 0;
        background: none;
        outline: none;
        min-width: 0;
    }

    svg {
        display: block;
        flex-shrink: 0;
    }

    i {
        font-style: normal;
        flex-shrink: 0;
    }

    .small {
        width: 10px;
        height: 10px;
    }

    .tri {
        border: 2px solid transparent;
        border-top: 3px solid #333;
        border-bottom: 0;
        margin: 0 1px;
    }

    .tri.tiny {
        border-width: 2px 1px 0;
        margin: 0 2px;
    }

    .tri.left {
        border: 2px solid transparent;
        border-right: 3px solid #333;
        border-left: 0;
    }

    .chev {
        width: 6px;
        height: 6px;
        fill: none;
        stroke: #555;
        stroke-width: 1.5;
    }

    .chev.down {
        transform: rotate(180deg);
    }

    .chev.prev {
        transform: rotate(-90deg);
    }

    .chev.next {
        transform: rotate(90deg);
    }

    .titlebar {
        display: flex;
        align-items: center;
        height: 16px;
        background: #cbcbcb;
    }

    .quick,
    .account,
    .winbtns {
        display: flex;
        align-items: center;
    }

    .logo {
        width: 11px;
        height: 13px;
        margin: 0 1px 0 2px;
        background: #1461b8;
        border-bottom: 2px solid #0b3d86;
        color: #fff;
        font-weight: 700;
    }

    .qbtn {
        display: grid;
        place-items: center;
        width: 14px;
        height: 13px;
    }

    .qbtn.on {
        background: #b5d9f2;
        border: 1px solid #4b98cf;
    }

    .gap {
        width: 3px;
    }

    .title {
        flex: 1;
        text-align: center;
        padding-bottom: 4px;
        color: #333;
    }

    .login {
        display: flex;
        align-items: center;
        gap: 2px;
        margin-right: 34px;
    }

    .help {
        width: 9px;
        height: 9px;
        margin: 0 4px 0 8px;
        border: 1px solid #385f80;
        border-radius: 50%;
        background: #eef3f7;
        font-weight: 700;
        line-height: 7px;
    }

    .winbtns {
        gap: 4px;
        padding: 0 2px 0 32px;
    }

    .winbtns path {
        fill: none;
        stroke: #222;
        stroke-width: 2;
    }

    .tabs {
        display: flex;
        gap: 1px;
        height: 12px;
        background: #cbcbcb;
    }

    .tabs button {
        padding: 0 5px;
        line-height: 12px;
    }

    .tabs .file {
        margin-right: 1px;
        background: #1f74ae;
        color: #fff;
    }

    .tabs .active {
        background: #f5f5f5;
    }

    .tabs .expand {
        display: flex;
        align-items: center;
        padding-left: 8px;
    }

    .pill {
        width: 9px;
        height: 6px;
        border: 1px solid #666;
        border-radius: 2px;
        background: radial-gradient(#444 1px, #eee 2px);
    }

    .ribbon {
        display: flex;
        height: 54px;
        background: #f3f3f3;
        border-bottom: 1px solid #d9d9d9;
    }

    .panel {
        display: flex;
        flex-direction: column;
        justify-content: space-between;
        padding: 3px 1px 1px;
    }

    .panel.line {
        border-right: 1px solid #e0e0e0;
    }

    .tools {
        display: flex;
        align-items: flex-start;
    }

    .tool {
        display: flex;
        flex-direction: column;
        align-items: center;
        position: relative;
        width: 22px;
        color: #333;
    }

    .tool.m {
        width: 24px;
    }

    .tool.l {
        width: 28px;
    }

    .tool.xl {
        width: 38px;
    }

    .tool svg {
        width: 18px;
        height: 18px;
        margin-bottom: 1px;
        opacity: 0.9;
    }

    .tool .tri {
        margin-top: 1px;
    }

    .tool .side {
        position: absolute;
        right: 0;
        bottom: 5px;
        margin: 0;
    }

    .tool:disabled {
        color: #b5b5b5;
    }

    .tool:disabled svg {
        opacity: 0.4;
    }

    .caption {
        display: flex;
        align-items: center;
        justify-content: center;
        gap: 3px;
        color: #333;
    }

    .brand {
        margin: 0 11px 0 auto;
    }

    .brand-top {
        display: flex;
        align-items: center;
        gap: 6px;
        height: 39px;
        padding-right: 6px;
        border-bottom: 1px solid #2b91c4;
    }

    .brand-top svg {
        width: 32px;
        height: 36px;
    }

    .brand strong {
        font-size: 30px;
        line-height: 36px;
        font-weight: 700;
        color: #2b91c4;
    }

    .brand p {
        margin: 3px 0 0;
        font-weight: 700;
        color: #111;
    }

    .options {
        height: 15px;
        background: #efefef;
    }

    .work {
        display: flex;
        flex: 1;
        min-height: 0;
        border-top: 1px solid #c6c6c6;
    }

    .props {
        display: flex;
        flex-direction: column;
        width: 145px;
        background: #f0f0f0;
        border-right: 1px solid #ccc;
    }

    .bar {
        display: flex;
        align-items: center;
        justify-content: space-between;
        height: 11px;
        padding: 0 2px;
        background: #f0f0f0;
    }

    .props .bar {
        background: #f6f6f6;
    }

    .type {
        display: flex;
        align-items: center;
        gap: 3px;
        height: 40px;
        padding: 1px 1px 1px 2px;
    }

    .thumb {
        display: grid;
        place-items: center;
        width: 37px;
        height: 37px;
        background: #f8f8f8;
        border: 1px solid #e5e5e5;
    }

    .thumb svg {
        width: 18px;
        height: 18px;
    }

    .type span {
        flex: 1;
    }

    .instance {
        display: flex;
        height: 15px;
    }

    .instance button {
        display: flex;
        align-items: center;
        gap: 2px;
        padding-left: 3px;
    }

    .select {
        display: flex;
        align-items: center;
        border: 1px solid #c8c8c8;
        background: #e0e0e0;
    }

    .select select {
        flex: 1;
        width: 100%;
        padding-left: 2px;
        appearance: none;
    }

    .select .chev {
        margin-right: 2px;
        stroke-width: 1;
    }

    .instance .select {
        width: 96px;
    }

    .gridwrap {
        display: flex;
        flex: 1;
        min-height: 0;
    }

    .rows {
        flex: 1;
        display: grid;
        grid-auto-rows: 1fr;
        background: #fff;
        min-height: 0;
    }

    .head {
        display: flex;
        align-items: center;
        justify-content: space-between;
        min-height: 0;
        padding: 0 2px;
        background: #dedede;
    }

    .fold-mark {
        width: 6px;
        height: 8px;
        fill: none;
        stroke: #333;
    }

    .row {
        display: grid;
        grid-template-columns: 62px 1fr 7px;
        min-height: 0;
        overflow: hidden;
        border-bottom: 1px dashed #d0d0d0;
    }

    .row label {
        padding-left: 6px;
    }

    .val {
        display: flex;
        align-items: center;
        border: 0 dashed #ccc;
        border-width: 0 1px;
        min-width: 0;
    }

    .row.off {
        color: #999;
    }

    .val input[type="text"] {
        width: 100%;
        height: 10px;
        padding-left: 2px;
    }

    .val input[type="text"]:disabled {
        color: #999;
    }

    .val input.focus {
        padding-left: 3px;
        border: 1px solid #444;
    }

    .val button {
        width: 100%;
        height: 10px;
        background: #e1e1e1;
        border: 1px solid #bbb;
        line-height: 8px;
    }

    .val input[type="checkbox"] {
        appearance: none;
        width: 8px;
        height: 8px;
        margin-left: 2px;
        border: 1px solid #666;
        background: #fff;
    }

    .off input[type="checkbox"] {
        border-color: #ccc;
    }

    .val input[type="checkbox"]:checked {
        background: #555;
    }

    .vscroll {
        display: flex;
        flex-direction: column;
        align-items: center;
        width: 9px;
        padding: 2px 0;
        background: #f0f0f0;
    }

    .vscroll i {
        width: 100%;
        background: #cdcdcd;
    }

    .props-scroll {
        width: 11px;
        justify-content: space-between;
    }

    .props-scroll i {
        flex: 1;
        width: 8px;
        margin: 2px 0 30px;
    }

    .foot {
        display: flex;
        align-items: center;
        justify-content: space-between;
        height: 14px;
        padding: 0 2px;
    }

    .foot a {
        background: #cfe6f7;
        color: #1767ae;
    }

    .foot button {
        width: 42px;
        height: 11px;
        background: #ccc;
        border: 1px solid #bfbfbf;
        color: #999;
        line-height: 9px;
    }

    .view {
        display: flex;
        flex-direction: column;
        flex: 1;
        min-width: 0;
    }

    .viewtabs {
        display: flex;
        align-items: center;
        justify-content: space-between;
        height: 11px;
        padding-right: 2px;
        background: #cbcbcb;
    }

    .viewtab {
        display: flex;
        align-items: center;
        gap: 4px;
        width: 72px;
        height: 11px;
        padding: 0 2px;
        background: #fff;
        font-weight: 600;
    }

    .viewtab button {
        margin-left: auto;
    }

    .stage {
        display: flex;
        flex: 1;
        min-height: 0;
    }

    .canvas {
        position: relative;
        flex: 1;
        background: #fff;
    }

    .scene {
        position: absolute;
        inset: 0;
        width: 100%;
        height: 100%;
    }

    .cube {
        position: absolute;
        top: 32px;
        right: 12px;
        width: 78px;
        height: 54px;
    }

    .cube text {
        fill: #999;
    }

    .navbar {
        position: absolute;
        top: 97px;
        right: 1px;
        width: 20px;
        height: 66px;
        border: 1px solid #bbb;
        border-radius: 3px;
        background: #fafafa;
    }

    .navbar svg {
        width: 18px;
        height: 64px;
        fill: none;
        stroke: #aaa;
    }

    .view-scroll {
        width: 10px;
        justify-content: space-between;
    }

    .view-scroll i {
        height: 10px;
    }

    .viewbar {
        display: flex;
        align-items: center;
        height: 12px;
        padding-left: 13px;
        background: #f2f2f2;
    }

    .viewbar button {
        display: grid;
        place-items: center;
        width: 12px;
        flex-shrink: 0;
    }

    .scale {
        display: flex;
        gap: 11px;
        width: 31px;
        flex-shrink: 0;
    }

    .scale b {
        font-weight: 400;
    }

    .hscroll {
        display: flex;
        align-items: center;
        justify-content: space-between;
        flex: 1;
        height: 12px;
        padding: 0 12px 0 2px;
    }

    .hscroll i {
        width: 10px;
        height: 8px;
        background: #cdcdcd;
    }

    .browser {
        position: relative;
        display: flex;
        flex-direction: column;
        width: 141px;
        border-left: 1px solid #ccc;
        background: #fff;
    }

    .tree {
        flex: 1;
        display: grid;
        grid-template-rows: repeat(41, minmax(0, 1fr));
        margin: 0 0 2px;
        padding: 0;
        list-style: none;
        background: linear-gradient(#ddd, #ddd) 6px 0 / 1px 100% no-repeat;
    }

    .node {
        display: flex;
        align-items: center;
        gap: 3px;
        padding-left: 4px;
        color: #333;
    }

    .node .small {
        margin: 0 1px;
        width: 9px;
        height: 9px;
    }

    .l2 {
        gap: 2px;
        padding-left: 15px;
    }

    .l3 {
        gap: 2px;
        padding-left: 26px;
    }

    .box {
        width: 5px;
        height: 5px;
        border: 1px solid #aaa;
        background: linear-gradient(#777, #777) center / 3px 1px no-repeat, linear-gradient(#777, #777) center / 1px 3px no-repeat, #fff;
    }

    .box.open {
        background: linear-gradient(#777, #777) center / 3px 1px no-repeat, #fff;
    }

    .box.none {
        visibility: hidden;
    }

    .twig {
        width: 3px;
        border-top: 1px dotted #bbb;
    }

    .sel {
        padding-right: 4px;
        background: #1b78bd;
        color: #fff;
    }

    .fold {
        grid-row: span 13;
    }

    .tree-scroll i {
        flex: 1;
        margin-top: 90px;
        margin-bottom: 2px;
    }

    .menu {
        position: absolute;
        right: 0;
        top: 285px;
        display: flex;
        flex-direction: column;
        width: 154px;
        height: 151px;
        padding: 0 1px 1px;
        background: #f1f1f1;
        border: 1px solid #ddd;
        box-shadow: 0 1px 2px #999;
    }

    .menu button {
        display: flex;
        flex: 1;
        align-items: center;
        gap: 5px;
        text-align: left;
    }

    .menu .hot {
        background: #90c8f6;
    }

    .menu hr {
        width: calc(100% - 18px);
        height: 1px;
        margin: 2px 0 1px auto;
        border: 0;
        background: #d5d5d5;
    }

    .mark {
        width: 12px;
        height: 12px;
    }

    .mark svg {
        width: 12px;
        height: 12px;
        background: #90c8f6;
        fill: none;
        stroke: #234;
    }

    .pointer {
        position: absolute;
        left: 70px;
        top: 46px;
        width: 8px;
        height: 12px;
        fill: #fff;
        stroke: #555;
        stroke-width: 1;
    }

    .status {
        display: flex;
        align-items: center;
        height: 11px;
        background: #cbcbcb;
    }

    .msg {
        flex: 1;
        padding-left: 1px;
    }

    .mid {
        display: flex;
        align-items: center;
        gap: 4px;
        padding-right: 100px;
    }

    .mid .select {
        width: 116px;
        height: 11px;
        background: #fff;
        border: 0;
        color: #777;
    }

    .count,
    .pair {
        display: flex;
        align-items: center;
        gap: 2px;
    }

    .mid .count {
        width: 26px;
    }

    .pair {
        gap: 5px;
    }

    .end {
        display: flex;
        align-items: center;
        gap: 4px;
        padding-right: 40px;
    }
</style>
